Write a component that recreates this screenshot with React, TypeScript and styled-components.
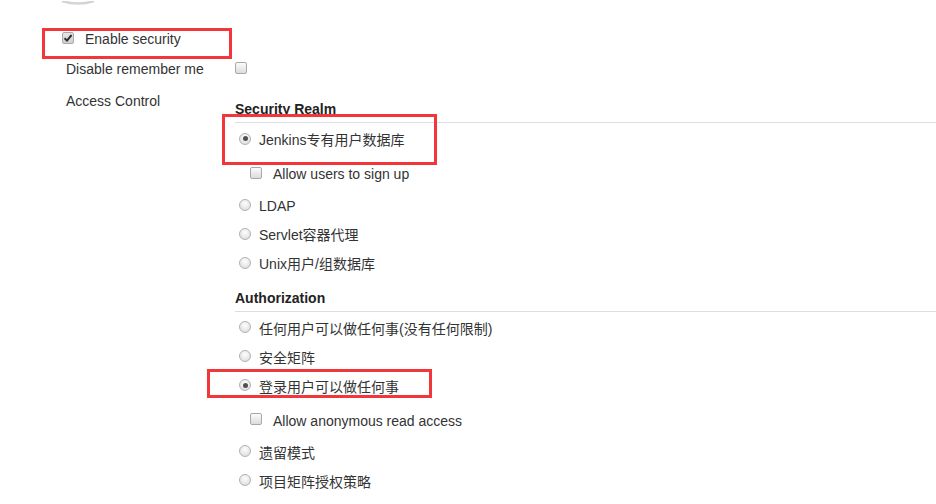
import React from "react";
import styled, { createGlobalStyle } from "styled-components";

const GlobalStyle = createGlobalStyle`
  html, body {
    margin: 0;
    padding: 0;
    background: #ffffff;
  }
  body {
    font-family: "Liberation Sans", Arial, "Noto Sans CJK SC", sans-serif;
    font-size: 14px;
    color: #333333;
  }
`;

const Page = styled.div`
  width: 936px;
  height: 504px;
  overflow: hidden;
  background: #fff;
`;

const TopArc = styled.div`
  margin-left: 60px;
  width: 40px;
  height: 4px;
  line-height: 0;
`;

const Annotation = styled.span<{ $left: number; $top: number; $w: number; $h: number }>`
  position: absolute;
  left: ${(p) => p.$left}px;
  top: ${(p) => p.$top}px;
  width: ${(p) => p.$w}px;
  height: ${(p) => p.$h}px;
  box-sizing: border-box;
  border: 3px solid #f2363a;
  pointer-events: none;
`;

const EnableRow = styled.div`
  position: relative;
  margin: 27px 0 0 62px;
  height: 16px;
  display: flex;
  align-items: center;
  gap: 11px;
  line-height: 16px;
`;

const Text = styled.span`
  white-space: nowrap;
  line-height: 16px;
`;

const BoxBase = styled.span`
  flex: none;
  display: inline-flex;
  align-items: center;
  justify-content: center;
  width: 12px;
  height: 12px;
  box-sizing: border-box;
  border: 1px solid #a9a9a9;
  background: linear-gradient(#fbfbfb, #dcdcdc);
  margin-bottom: 3px;
`;

const CheckBoxShape = styled(BoxBase)<{ $checked?: boolean }>`
  border-radius: 2px;
  background: ${(p) => (p.$checked ? "linear-gradient(#e6e6e6, #cfcfcf)" : "linear-gradient(#fbfbfb, #dcdcdc)")};
`;

const RadioShape = styled(BoxBase)`
  border-radius: 50%;
  border-color: #b2b2b2;
  background: radial-gradient(circle at 50% 35%, #fdfdfd 0%, #e9e9e9 55%, #d6d6d6 100%);
`;

const RadioDot = styled.span`
  width: 5px;
  height: 5px;
  border-radius: 50%;
  background: #505050;
`;

const Checkbox = ({ checked }: { checked?: boolean }) => (
  <CheckBoxShape $checked={checked}>
    {checked && (
      <svg width="10" height="10" viewBox="0 0 10 10">
        <path d="M1.6 5.2 L4 7.6 L8.6 2" fill="none" stroke="#2f2f2f" strokeWidth="2" />
      </svg>
    )}
  </CheckBoxShape>
);

const Radio = ({ checked }: { checked?: boolean }) => (
  <RadioShape>{checked && <RadioDot />}</RadioShape>
);

const Form = styled.div`
  display: grid;
  grid-template-columns: 169px 1fr;
  grid-template-rows: 32px auto;
  margin: 14px 0 0 66px;
`;

const FieldLabel = styled.div`
  line-height: 16px;
  white-space: nowrap;
`;

const FieldCell = styled.div`
  display: flex;
  flex-direction: column;
`;

const InlineCell = styled.div`
  display: flex;
  align-items: center;
  height: 16px;
`;

const Section = styled.section<{ $gap?: number }>`
  margin-top: ${(p) => p.$gap ?? 0}px;
  display: flex;
  flex-direction: column;
`;

const SectionHeader = styled.div`
  font-weight: bold;
  color: #222;
  line-height: 16px;
  padding: 8px 0 5px;
  border-bottom: 1px solid #dddddd;
`;

const OptionList = styled.div`
  margin-top: 2.5px;
  display: flex;
  flex-direction: column;
`;

const RadioRow = styled.div`
  position: relative;
  height: 29px;
  display: flex;
  align-items: center;
  gap: 8px;
  padding-left: 4px;
`;

const NestedRow = styled.div`
  box-sizing: border-box;
  height: 37px;
  padding: 2px 0 0 15px;
  display: flex;
  align-items: center;
  gap: 11px;
`;

type Opt = { label: string; checked?: boolean; mark?: { l: number; t: number; w: number; h: number }; nested?: string };

const realm: Opt[] = [
  { label: "Jenkins专有用户数据库", checked: true, mark: { l: -13, t: -12, w: 215, h: 51 }, nested: "Allow users to sign up" },
  { label: "LDAP" },
  { label: "Servlet容器代理" },
  { label: "Unix用户/组数据库" },
];

const auth: Opt[] = [
  { label: "任何用户可以做任何事(没有任何限制)" },
  { label: "安全矩阵" },
  { label: "登录用户可以做任何事", checked: true, mark: { l: -28, t: -3, w: 225, h: 29 }, nested: "Allow anonymous read access" },
  { label: "遗留模式" },
  { label: "项目矩阵授权策略" },
];

const Options = ({ items }: { items: Opt[] }) => (
  <OptionList>
    {items.map((o) => (
      <React.Fragment key={o.label}>
        <RadioRow>
          {o.mark && <Annotation $left={o.mark.l} $top={o.mark.t} $w={o.mark.w} $h={o.mark.h} />}
          <Radio checked={o.checked} />
          <Text>{o.label}</Text>
        </RadioRow>
        {o.nested && (
          <NestedRow>
            <Checkbox />
            <Text>{o.nested}</Text>
          </NestedRow>
        )}
      </React.Fragment>
    ))}
  </OptionList>
);

export default function App() {
  return (
    <Page>
      <GlobalStyle />
      <TopArc>
        <svg width="40" height="4" viewBox="0 0 40 4">
          <path d="M2 0 Q 18 5 34 0" fill="none" stroke="#d4d4d4" strokeWidth="2.5" />
        </svg>
      </TopArc>
      <EnableRow>
        <Annotation $left={-20} $top={-3} $w={190} $h={31} />
        <Checkbox checked />
        <Text>Enable security</Text>
      </EnableRow>
      <Form>
        <FieldLabel>Disable remember me</FieldLabel>
        <InlineCell>
          <Checkbox />
        </InlineCell>
        <FieldLabel>Access Control</FieldLabel>
        <FieldCell>
          <Section>
            <SectionHeader>Security Realm</SectionHeader>
            <Options items={realm} />
          </Section>
          <Section $gap={3}>
            <SectionHeader>Authorization</SectionHeader>
            <Options items={auth} />
          </Section>
        </FieldCell>
      </Form>
    </Page>
  );
}
